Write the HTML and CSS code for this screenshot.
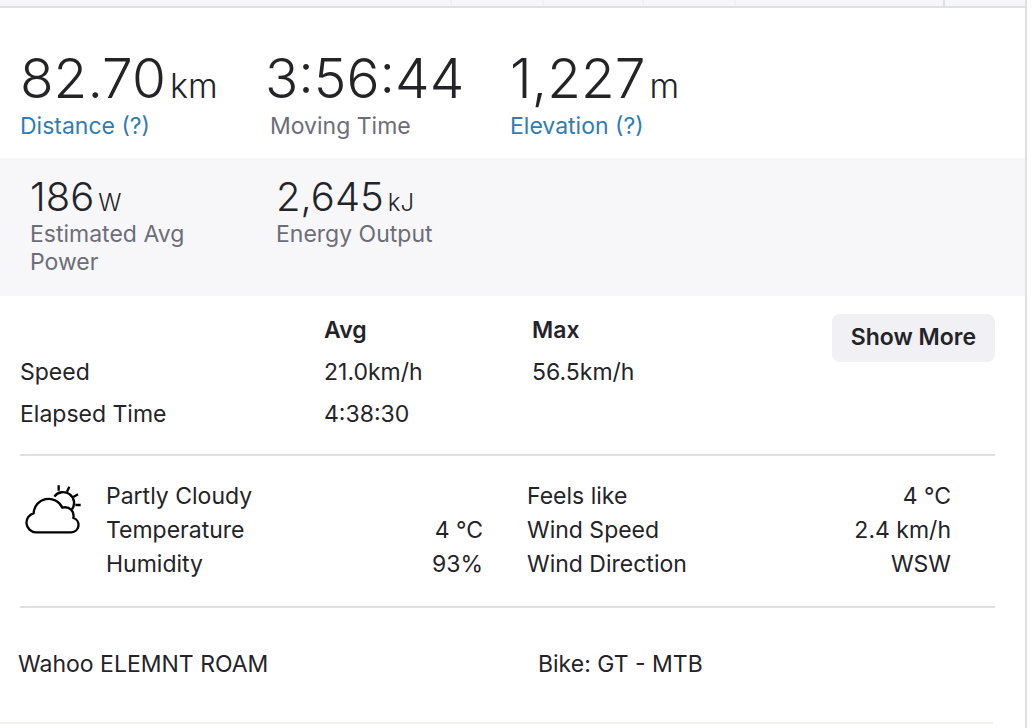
FILE: index.html
```html
<!DOCTYPE html>
<html lang="en">
<head>
<meta charset="utf-8">
<title>Activity details</title>
<link rel="stylesheet" href="styles.css">
</head>
<body>
<main class="activity">
  <div class="strip"><span></span><span></span><span></span><span></span><span class="dark"></span></div>
  <ul class="primary">
    <li><strong>82.70<small>km</small></strong><a href="#distance">Distance (?)</a></li>
    <li><strong>3:56:44</strong><span class="inset">Moving Time</span></li>
    <li><strong>1,227<small>m</small></strong><a href="#elevation">Elevation (?)</a></li>
  </ul>
  <ul class="secondary">
    <li><strong>186<small>W</small></strong><span>Estimated Avg Power</span></li>
    <li><strong>2,645<small>kJ</small></strong><span>Energy Output</span></li>
  </ul>
  <section class="details">
    <table>
      <thead><tr><td></td><th scope="col">Avg</th><th scope="col">Max</th></tr></thead>
      <tbody>
        <tr><th scope="row">Speed</th><td>21.0<small>km/h</small></td><td>56.5<small>km/h</small></td></tr>
        <tr><th scope="row">Elapsed Time</th><td>4:38:30</td><td></td></tr>
      </tbody>
    </table>
    <button type="button">Show More</button>
  </section>
  <section class="weather">
    <svg class="cloud" viewBox="15 15 186 156" aria-hidden="true">
      <path d="M62 163H169A22 22 0 0 0 175 120C179 100 164 83 142 89A45 45 0 0 0 56 106A29 29 0 0 0 62 163Z"/>
      <path d="M118 56A30 30 0 0 1 171 94"/>
      <path d="M131 22V38M163 26L156 41M175 57L189 49M181 81H197"/>
    </svg>
    <dl>
      <div><dt>Partly Cloudy</dt></div>
      <div><dt>Temperature</dt><dd>4 °C</dd></div>
      <div><dt>Humidity</dt><dd>93%</dd></div>
    </dl>
    <dl class="right">
      <div><dt>Feels like</dt><dd>4 °C</dd></div>
      <div><dt>Wind Speed</dt><dd>2.4 km/h</dd></div>
      <div><dt>Wind Direction</dt><dd>WSW</dd></div>
    </dl>
  </section>
  <footer class="gear"><span>Wahoo ELEMNT ROAM</span><span>Bike: GT - MTB</span></footer>
</main>
</body>
</html>
```
FILE: styles.css
```css
* { box-sizing: border-box; }
body { margin: 0; background: #fff; color: #242428; font: 23px/34px Inter, "Liberation Sans", sans-serif; }
ul, dl, dd { margin: 0; padding: 0; list-style: none; }
.activity { min-height: 100vh; margin-right: 5px; border-right: 2px solid #dfdfe8; }
.strip { display: grid; grid-template-columns: 452px 92px 100px 92px 209px; height: 8px; background: #f7f7fa; border-bottom: 2px solid #dfdfe8; }
.strip span { border-right: 2px solid #f0f0f5; }
.strip .dark { border-color: #dfdfe8; }
strong { display: block; font-weight: 300; white-space: nowrap; }
strong small { margin-left: 4px; font-weight: 300; line-height: 1; }
.primary { display: grid; grid-template-columns: 245px 245px 1fr; padding: 39px 20px 15px; }
.primary strong { font-size: 55px; line-height: 62px; }
.primary small { font-size: 34px; }
.primary a, .primary span, .secondary span { display: block; color: #6d6d78; }
.primary a { color: #2f7db4; text-decoration: none; }
.primary .inset { padding-left: 5px; }
.secondary { display: grid; grid-template-columns: 246px 1fr; padding: 16px 30px 20px; background: #f7f7fa; }
.secondary li { max-width: 200px; line-height: 28px; }
.secondary strong { font-size: 40px; line-height: 46px; }
.secondary small { font-size: 24px; }
.details { display: flex; align-items: flex-start; margin: 0 30px 0 20px; padding: 13px 0 19px; border-bottom: 2px solid #dfdfe8; }
table { flex: 1; border-collapse: collapse; }
th, td { height: 42px; padding: 0; text-align: left; font-weight: 400; }
th:first-child, td:first-child { width: 304px; }
th:nth-child(2), td:nth-child(2) { width: 208px; }
thead th { font-weight: 600; }
td small { font-size: 23px; }
button { margin-top: 5px; padding: 6px 19px 8px; border: 0; border-radius: 8px; background: #f0f0f5; color: #242428; font: 600 23px/34px Inter, "Liberation Sans", sans-serif; }
.weather { display: grid; grid-template-columns: 86px 377fr 468fr; margin: 0 30px 0 20px; padding: 23px 44px 25px 0; border-bottom: 2px solid #dfdfe8; }
.cloud { width: 62px; margin-top: 4px; fill: none; stroke: #000; stroke-width: 7; stroke-linejoin: round; }
.right { margin-left: 44px; }
dl div { display: flex; justify-content: space-between; }
.gear { display: grid; grid-template-columns: 520fr 455fr; margin-right: 32px; padding: 39px 0 41px 18px; border-bottom: 2px solid #f0f0f5; }
```
